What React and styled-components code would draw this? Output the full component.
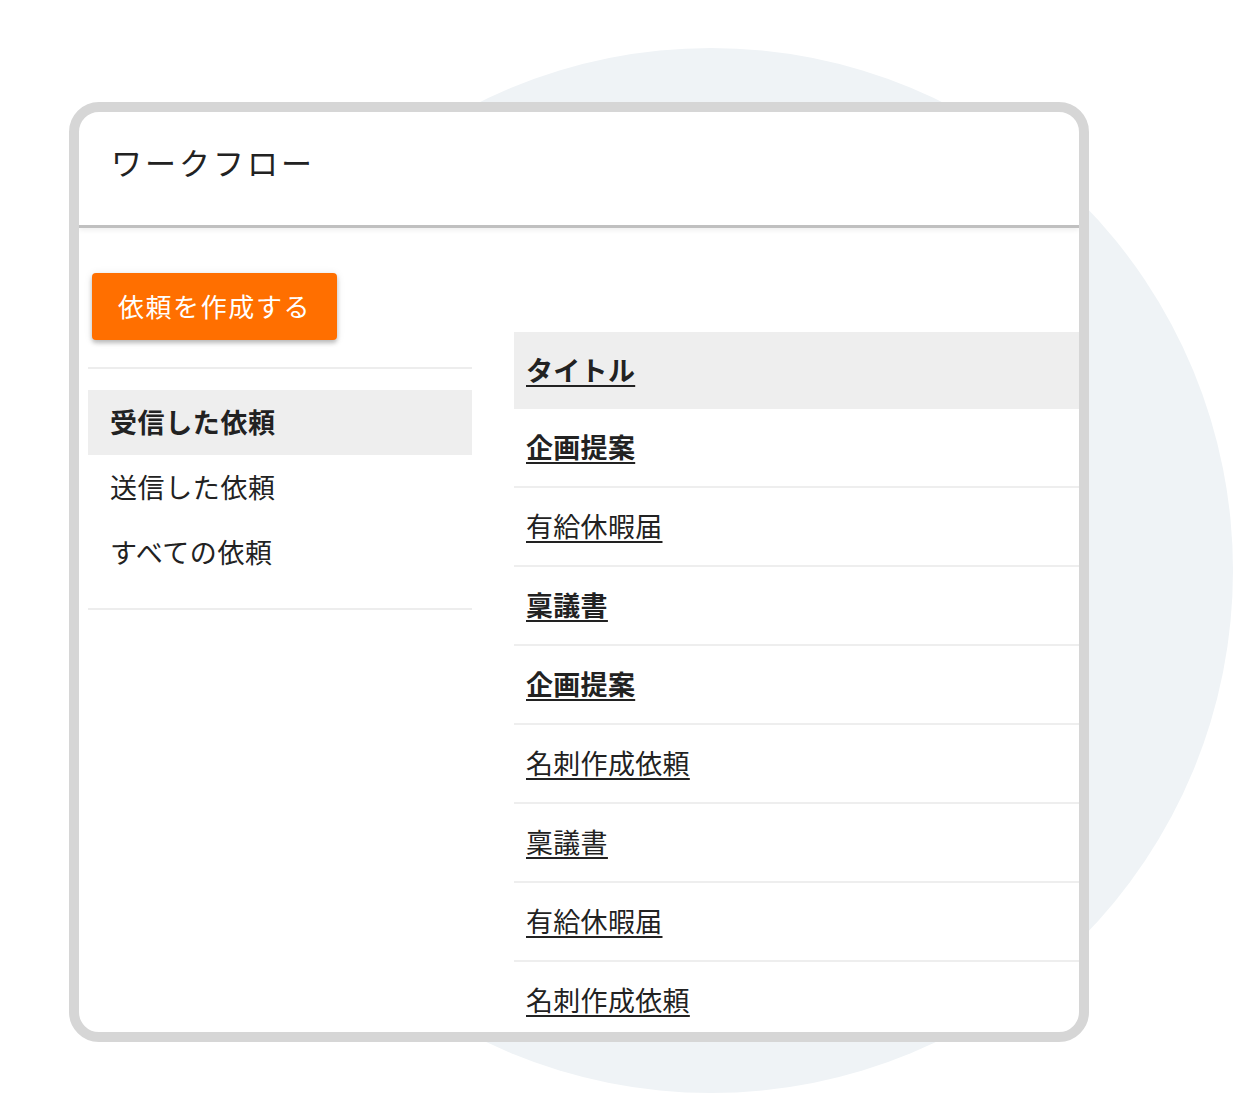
import React from "react";
import styled, { createGlobalStyle } from "styled-components";

const Global = createGlobalStyle`
  html, body { margin: 0; padding: 0; background: #ffffff; }
  body { font-family: "Noto Sans CJK JP", "Noto Sans", sans-serif; color: #222222; }
  * { box-sizing: border-box; }
`;

const Page = styled.div`
  position: relative;
  width: 1240px;
  height: 1100px;
  overflow: hidden;
  padding: 102px 0 0 69px;
`;

const Circle = styled.div`
  position: absolute;
  left: 189px;
  top: 48px;
  width: 1044px;
  height: 1045px;
  border-radius: 50%;
  background: #eff3f6;
`;

const Frame = styled.div`
  position: relative;
  width: 1020px;
  height: 940px;
  border: 10px solid #d6d6d6;
  border-radius: 30px;
  background: #ffffff;
  overflow: hidden;
  display: flex;
  flex-direction: column;
`;

const Header = styled.header`
  position: relative;
  z-index: 1;
  flex: none;
  height: 116px;
  display: flex;
  align-items: center;
  padding: 0 0 14px 32px;
  border-bottom: 3px solid #c0c0c0;
  box-shadow: 0 2px 5px rgba(0, 0, 0, 0.07);
`;

const Title = styled.h1`
  margin: 0;
  font-size: 31px;
  font-weight: 400;
  letter-spacing: 3px;
  color: #222222;
`;

const Body = styled.div`
  display: flex;
  gap: 42px;
  padding-left: 9px;
`;

const Sidebar = styled.aside`
  width: 384px;
  flex: none;
  padding-top: 45px;
`;

const CreateButton = styled.button`
  display: flex;
  align-items: center;
  justify-content: center;
  width: 245px;
  height: 67px;
  margin-left: 4px;
  border: none;
  border-radius: 4px;
  background: #ff6f00;
  color: #ffffff;
  font-family: inherit;
  font-size: 26px;
  letter-spacing: 1.6px;
  box-shadow: 0 3px 4px rgba(0, 0, 0, 0.22), 0 1px 8px rgba(0, 0, 0, 0.1);
  padding: 0 0 2px;
`;

const Divider = styled.hr`
  margin: ${(p) => p.$top || 0}px 0 0;
  border: none;
  height: 2px;
  background: #ededed;
`;

const NavList = styled.ul`
  list-style: none;
  margin: 0;
  padding: 21px 0 23px;
`;

const NavItem = styled.li`
  height: 65px;
  display: flex;
  align-items: center;
  padding: 0 0 2px 22px;
  font-size: 27px;
  letter-spacing: 0.6px;
  font-weight: ${(p) => (p.$active ? 700 : 400)};
  background: ${(p) => (p.$active ? "#eeeeee" : "transparent")};
  color: #222222;
`;

const Table = styled.div`
  flex: 1;
  margin-top: 104px;
`;

const Row = styled.div`
  height: ${(p) => (p.$head ? 77 : 79)}px;
  display: flex;
  align-items: center;
  padding: 0 0 ${(p) => (p.$head ? 2 : 3)}px 12px;
  background: ${(p) => (p.$head ? "#eeeeee" : "transparent")};
  border-bottom: ${(p) => (p.$head ? "none" : "2px solid #eeeeee")};
`;

const Cell = styled.a`
  font-size: 27px;
  letter-spacing: 0.3px;
  font-weight: ${(p) => (p.$bold ? 700 : 400)};
  color: #222222;
  text-decoration: underline;
  text-underline-offset: 4px;
  text-decoration-thickness: 2px;
  cursor: pointer;
`;

const rows = [
  { t: "企画提案", b: true },
  { t: "有給休暇届", b: false },
  { t: "稟議書", b: true },
  { t: "企画提案", b: true },
  { t: "名刺作成依頼", b: false },
  { t: "稟議書", b: false },
  { t: "有給休暇届", b: false },
  { t: "名刺作成依頼", b: false },
];

export default function App() {
  return (
    <>
      <Global />
      <Page>
        <Circle />
        <Frame>
          <Header>
            <Title>ワークフロー</Title>
          </Header>
          <Body>
            <Sidebar>
              <CreateButton>依頼を作成する</CreateButton>
              <Divider $top={27} />
              <NavList>
                <NavItem $active>受信した依頼</NavItem>
                <NavItem>送信した依頼</NavItem>
                <NavItem>すべての依頼</NavItem>
              </NavList>
              <Divider />
            </Sidebar>
            <Table>
              <Row $head>
                <Cell $bold>タイトル</Cell>
              </Row>
              {rows.map((r, i) => (
                <Row key={i}>
                  <Cell $bold={r.b}>{r.t}</Cell>
                </Row>
              ))}
            </Table>
          </Body>
        </Frame>
      </Page>
    </>
  );
}
